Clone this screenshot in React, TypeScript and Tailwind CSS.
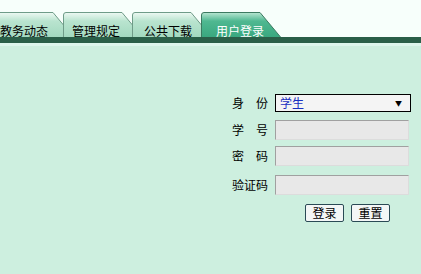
import React from "react";

type TabProps = { label: string; active?: boolean; pl: number; idx: number };

function Tab({ label, active, pl, idx }: TabProps) {
  const gid = `g${idx}`;
  return (
    <div className="relative w-[69px] h-[25px] shrink-0">
      <svg
        className="absolute left-0 top-0 overflow-visible"
        width="80"
        height="25"
        viewBox="0 0 80 25"
      >
        <defs>
          <linearGradient id={gid} x1="0" y1="0" x2="0" y2="1">
            {active ? (
              <>
                <stop offset="0" stopColor="#b8e6d2" />
                <stop offset="0.35" stopColor="#4fb891" />
                <stop offset="1" stopColor="#3aa87f" />
              </>
            ) : (
              <>
                <stop offset="0" stopColor="#eef9f3" />
                <stop offset="0.35" stopColor="#b9e4cf" />
                <stop offset="1" stopColor="#a3d9bf" />
              </>
            )}
          </linearGradient>
        </defs>
        <path
          d="M0.5,25 L0.5,3 Q0.5,0.5 3,0.5 L59,0.5 L79.5,25 Z"
          fill={`url(#${gid})`}
        />
        <path
          d="M0.5,25 L0.5,3 Q0.5,0.5 3,0.5 L59,0.5 L79.5,25"
          fill="none"
          stroke={active ? "#3c7a60" : "#6f9c88"}
          strokeWidth="1"
        />
      </svg>
      <span
        className={`relative block pt-[12px] text-[12px] leading-[14px] whitespace-nowrap ${
          active ? "text-white" : "text-black"
        }`}
        style={{ paddingLeft: pl }}
      >
        {label}
      </span>
    </div>
  );
}

export default function App() {
  const font = "font-['Noto_Sans_CJK_SC','Noto_Sans',sans-serif]";
  return (
    <div
      className={`w-[421px] h-[274px] overflow-hidden bg-[#cdefdf] ${font}`}
    >
      <div className="h-[37px] bg-[#f7fffb] pt-[12px]">
        <div className="flex ml-[-6px]">
          <Tab idx={1} label="教务动态" pl={6} />
          <Tab idx={2} label="管理规定" pl={9} />
          <Tab idx={3} label="公共下载" pl={12} />
          <Tab idx={4} label="用户登录" pl={15} active />
        </div>
      </div>
      <div className="h-[6px] bg-[#2a5f48]" />
      <div className="h-[3px] bg-[#ddf6ec]" />

      <div className="pl-[232px] pt-[48px] text-[12px] leading-[14px] text-black">
        <div className="flex items-center h-[18px]">
          <span className="w-[36px] whitespace-nowrap">身　份</span>
          <div className="ml-[7px] w-[136px] h-[18px] border border-black bg-[#f4f4f4] flex items-center justify-between pl-[4px] pr-[8px]">
            <span className="text-[#1a2fc0]">学生</span>
            <span className="text-[7px] leading-[8px]">▼</span>
          </div>
        </div>
        <div className="flex items-center h-[20px] mt-[8px]">
          <span className="w-[36px] whitespace-nowrap">学　号</span>
          <div className="ml-[7px] w-[134px] h-[20px] bg-[#e8e8e8] border border-t-[#a0a0a0] border-l-[#a0a0a0] border-r-[#dcdcdc] border-b-[#dcdcdc]" />
        </div>
        <div className="flex items-center h-[20px] mt-[6px]">
          <span className="w-[36px] whitespace-nowrap">密　码</span>
          <div className="ml-[7px] w-[134px] h-[20px] bg-[#e8e8e8] border border-t-[#a0a0a0] border-l-[#a0a0a0] border-r-[#dcdcdc] border-b-[#dcdcdc]" />
        </div>
        <div className="flex items-center h-[20px] mt-[9px]">
          <span className="w-[36px] whitespace-nowrap">验证码</span>
          <div className="ml-[7px] w-[134px] h-[20px] bg-[#e8e8e8] border border-t-[#a0a0a0] border-l-[#a0a0a0] border-r-[#dcdcdc] border-b-[#dcdcdc]" />
        </div>
        <div className="flex gap-[7px] mt-[9px] pl-[73px]">
          <button className="w-[39px] h-[18px] rounded-[2px] border border-[#2a4a55] bg-[#f3f6f6] text-[12px] leading-[14px] text-black flex items-center justify-center">
            登录
          </button>
          <button className="w-[39px] h-[18px] rounded-[2px] border border-[#2a4a55] bg-[#f3f6f6] text-[12px] leading-[14px] text-black flex items-center justify-center">
            重置
          </button>
        </div>
      </div>
    </div>
  );
}
